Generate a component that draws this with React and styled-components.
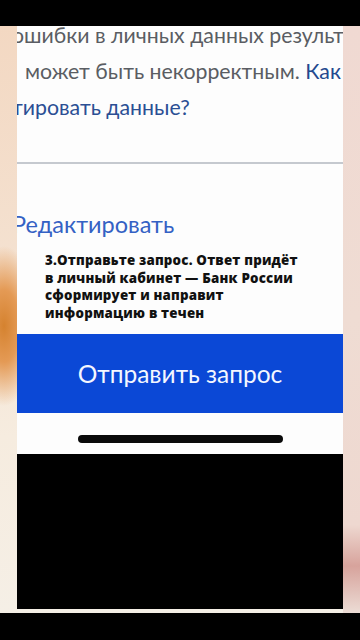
import React from 'react';
import styled, { createGlobalStyle } from 'styled-components';

const GlobalStyle = createGlobalStyle`
  html, body {
    margin: 0;
    padding: 0;
    background: #000;
  }
  * {
    box-sizing: border-box;
  }
`;

const Page = styled.div`
  width: 360px;
  height: 640px;
  display: flex;
  flex-direction: column;
  overflow: hidden;
  background: #000;
`;

const Letterbox = styled.div`
  height: ${(p) => p.$h}px;
  flex-shrink: 0;
  background: #000;
`;

// blurred photo behind the phone screenshot
const Stage = styled.div`
  flex: 1;
  display: flex;
  padding: 0 17px 4px 17px;
  background:
    radial-gradient(ellipse 34px 80px at 4px 300px, #d5822f 0%, #e49a55 45%, rgba(240, 200, 160, 0) 100%),
    linear-gradient(180deg, #f3d8c2 0%, #f4e1d0 40%, #f6ecdf 70%, #f5efe6 100%);
  background-color: #f4e2d2;
  position: relative;
  &::after {
    content: '';
    position: absolute;
    top: 0;
    right: 0;
    bottom: 0;
    width: 17px;
    background: linear-gradient(180deg, #f0d9d2 0%, #efdcd3 50%, #eed8d0 85%, #d7a39c 92%, #ecdcd5 100%);
  }
`;

const Panel = styled.div`
  width: 326px;
  display: flex;
  flex-direction: column;
  background: #fdfdfc;
`;

const Screen = styled.div`
  height: 428px;
  flex-shrink: 0;
  overflow: hidden;
  display: flex;
  flex-direction: column;
  background: #fdfdfd;
  font-family: Lato, 'Noto Sans', sans-serif;
`;

const Intro = styled.div`
  margin-top: -9px;
  display: flex;
  flex-direction: column;
`;

const TextLine = styled.div`
  margin-left: ${(p) => p.$shift}px;
  height: 36px;
  line-height: 36px;
  font-size: 21.3px;
  color: ${(p) => (p.$link ? '#2b4f94' : '#5a5d63')};
  white-space: nowrap;
`;

const Link = styled.span`
  color: #23488e;
`;

const Divider = styled.hr`
  margin: 37px 0 0;
  border: 0;
  height: 2px;
  background: #c5c9cf;
`;

const EditLink = styled.div`
  margin: 46px 0 0 -5px;
  font-size: 23.5px;
  line-height: 28px;
  color: #3461c4;
  white-space: nowrap;
`;

const StepText = styled.p`
  margin: 14px 0 0 28px;
  font-family: 'Open Sans', 'Noto Sans', sans-serif;
  font-weight: 800;
  font-size: 13.3px;
  line-height: 17.5px;
  color: #111;
  letter-spacing: 0.2px;
`;

const SendButton = styled.button`
  margin-top: 12px;
  height: 79px;
  border: 0;
  background: #0b48d6;
  color: #f4f7ff;
  font-family: Lato, 'Noto Sans', sans-serif;
  font-size: 24.5px;
  cursor: pointer;
`;

const HomeArea = styled.div`
  flex: 1;
  display: flex;
  justify-content: center;
  padding-top: 22px;
`;

const HomeIndicator = styled.div`
  width: 205px;
  height: 8px;
  border-radius: 4px;
  background: #0a0a0a;
`;

const Blackout = styled.div`
  flex: 1;
  background: #000;
`;

export default function App() {
  return (
    <>
      <GlobalStyle />
      <Page>
        <Letterbox $h={26} />
        <Stage>
          <Panel>
            <Screen>
              <Intro>
                <TextLine $shift={-5}>ошибки в личных данных результ</TextLine>
                <TextLine $shift={8}>
                  может быть некорректным. <Link>Как</Link>
                </TextLine>
                <TextLine $shift={-5} $link>
                  тировать данные?
                </TextLine>
              </Intro>
              <Divider />
              <EditLink>Редактировать</EditLink>
              <StepText>
                3.Отправьте запрос. Ответ придёт
                <br />в личный кабинет — Банк России
                <br />сформирует и направит
                <br />информацию в течен
              </StepText>
              <SendButton>Отправить запрос</SendButton>
              <HomeArea>
                <HomeIndicator />
              </HomeArea>
            </Screen>
            <Blackout />
          </Panel>
        </Stage>
        <Letterbox $h={27} />
      </Page>
    </>
  );
}
